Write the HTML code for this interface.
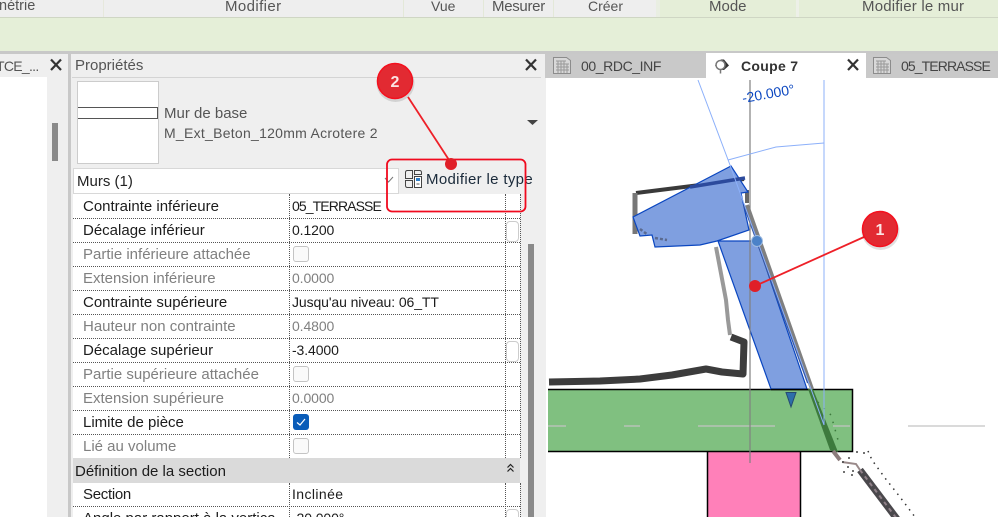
<!DOCTYPE html>
<html lang="fr"><head><meta charset="utf-8"><title>Propriétés</title>
<style>
html,body{margin:0;padding:0;background:#fff}
#p{position:relative;width:998px;height:517px;overflow:hidden;background:#efefef;font-family:"Liberation Sans",sans-serif;font-size:15px;color:#1c1c1c}
#p div{position:absolute}
.t{white-space:nowrap;line-height:18px;height:18px}
.v{font-size:14px;letter-spacing:-.1px}
.r{color:#555}
.g{color:#808080}
.hl{left:73px;width:447px;height:0;border-top:1px dotted #555}
.vl{width:0;border-left:1px dotted #555}
.cb{left:293px;width:14px;height:14px;border:1px solid #c4c4c4;border-radius:3px;background:#fafafa}
.sb{left:506px;width:11px;height:19px;border:1px solid #ccc;border-radius:4px;background:#fff}
</style></head><body>
<div id="p">
<!-- ribbon -->
<div style="left:0;top:0;width:660px;height:17px;background:#eeeeee"></div>
<div style="left:660px;top:0;width:338px;height:17px;background:#e5eed8"></div>
<div style="left:0;top:17px;width:998px;height:1px;background:#cfd6c4"></div>
<div style="left:0;top:18px;width:998px;height:33px;background:#e5efd8"></div>
<div style="left:0;top:51px;width:998px;height:3px;background:#c8c8c8"></div>
<div style="left:103px;top:0;width:1px;height:17px;background:#e6e8dc"></div>
<div style="left:403px;top:0;width:1px;height:17px;background:#e3e8d8"></div>
<div style="left:483px;top:0;width:1px;height:17px;background:#e3e8d8"></div>
<div style="left:553px;top:0;width:1px;height:17px;background:#e3e8d8"></div>
<div style="left:656px;top:0;width:4px;height:17px;background:#e9eee2"></div>
<div style="left:796px;top:0;width:3px;height:17px;background:#edf0e8"></div>
<div class="t r" style="left:-1px;top:-3px;font-size:14.500px">nétrie</div>
<div class="t r" style="left:225px;top:-2px;letter-spacing:.4px">Modifier</div>
<div class="t r" style="left:431px;top:-3px;font-size:14px">Vue</div>
<div class="t r" style="left:492px;top:-2px;letter-spacing:-.3px">Mesurer</div>
<div class="t r" style="left:588px;top:-3px;font-size:14px">Créer</div>
<div class="t r" style="left:709px;top:-2px">Mode</div>
<div class="t r" style="left:862px;top:-2px;letter-spacing:.2px">Modifier le mur</div>

<!-- left panel -->
<div style="left:0;top:77px;width:47px;height:440px;background:#fff"></div>
<div style="left:52px;top:123px;width:6px;height:38px;background:#8a8a8a"></div>
<div class="t r" style="left:-4px;top:57px;font-size:14px;letter-spacing:-.7px">TCE_...</div>
<svg style="position:absolute;left:49px;top:58px" width="14" height="14"><path d="M2 1.500L12 12M12 1.500L2 12" stroke="#333" stroke-width="2.200" fill="none"/></svg>
<div style="left:68px;top:54px;width:3px;height:463px;background:#c8c8c8"></div>

<!-- properties -->
<div class="t r" style="left:75px;top:57px">Propriétés</div>
<svg style="position:absolute;left:524px;top:58px" width="14" height="14"><path d="M2 1.500L12 12M12 1.500L2 12" stroke="#333" stroke-width="2.200" fill="none"/></svg>
<div style="left:72px;top:77px;width:469px;height:1px;background:#d4d4d4"></div>
<div style="left:77px;top:81px;width:80px;height:81px;background:#fff;border:1px solid #ccc"></div>
<div style="left:78px;top:107px;width:79px;height:10px;background:#fff;border:1px solid #555;border-left:0"></div>
<div class="t r" style="left:164px;top:105px">Mur de base</div>
<div class="t r" style="left:164px;top:124px;font-size:14px;letter-spacing:.27px">M_Ext_Beton_120mm Acrotere 2</div>
<svg style="position:absolute;left:527px;top:120px" width="12" height="6"><path d="M0 0H11L5.500 5Z" fill="#444"/></svg>
<div style="left:73px;top:168px;width:324px;height:24px;background:#fff;border:1px solid #d8d8d8"></div>
<div class="t" style="left:77px;top:173px;color:#222">Murs (1)</div>
<svg style="position:absolute;left:384px;top:176px" width="10" height="8"><path d="M1 2L4.500 6L9 1" stroke="#777" fill="none"/></svg>
<svg style="position:absolute;left:404px;top:169px" width="19" height="21" fill="none" stroke="#444" stroke-width="1"><path d="M1.500 3.500Q1.500 1.500 3.500 1.500H8.500V9.500H1.500ZM1.500 11.500H8.500V18.500H3.500Q1.500 18.500 1.500 16.500ZM10.500 1.500H15.500Q17.500 1.500 17.500 3.500V5.500H10.500Z"/><rect x="10.500" y="7.500" width="7" height="11" fill="#fff"/><rect x="12" y="9" width="4" height="3" fill="#2f7fc8" stroke="none"/><path d="M12.500 15L15.500 15" stroke="#555"/></svg>
<div class="t" style="left:426px;top:171px;color:#1a2a3a;letter-spacing:.33px">Modifier le type</div>

<!-- table -->
<div style="left:73px;top:194px;width:447px;height:323px;background:#fff"></div>
<div class="vl" style="left:289px;top:194px;height:264px"></div>
<div class="vl" style="left:505px;top:194px;height:264px"></div>
<div class="vl" style="left:520px;top:194px;height:264px"></div>
<div class="vl" style="left:289px;top:483px;height:34px"></div>
<div class="vl" style="left:505px;top:483px;height:34px"></div>
<div class="vl" style="left:520px;top:483px;height:34px"></div>
<div class="hl" style="top:218px"></div><div class="hl" style="top:242px"></div><div class="hl" style="top:266px"></div><div class="hl" style="top:290px"></div><div class="hl" style="top:314px"></div><div class="hl" style="top:338px"></div><div class="hl" style="top:362px"></div><div class="hl" style="top:386px"></div><div class="hl" style="top:410px"></div><div class="hl" style="top:434px"></div>
<div class="hl" style="top:506px"></div>
<div style="left:73px;top:458px;width:447px;height:25px;background:#dadada"></div>
<div style="left:528px;top:244px;width:6px;height:273px;background:#8a8a8a"></div>

<div class="t" style="left:83px;top:198px">Contrainte inférieure</div>
<div class="t v" style="left:292px;top:197px;letter-spacing:-.9px">05_TERRASSE</div>
<div class="t" style="left:83px;top:222px">Décalage inférieur</div>
<div class="t v" style="left:292px;top:221px">0.1200</div>
<div class="t g" style="left:83px;top:246px">Partie inférieure attachée</div>
<div class="t g" style="left:83px;top:270px">Extension inférieure</div>
<div class="t v g" style="left:292px;top:269px">0.0000</div>
<div class="t" style="left:83px;top:294px">Contrainte supérieure</div>
<div class="t v" style="left:292px;top:293px">Jusqu'au niveau: 06_TT</div>
<div class="t g" style="left:83px;top:318px">Hauteur non contrainte</div>
<div class="t v g" style="left:292px;top:317px">0.4800</div>
<div class="t" style="left:83px;top:342px">Décalage supérieur</div>
<div class="t v" style="left:292px;top:341px">-3.4000</div>
<div class="t g" style="left:83px;top:366px">Partie supérieure attachée</div>
<div class="t g" style="left:83px;top:390px">Extension supérieure</div>
<div class="t v g" style="left:292px;top:389px">0.0000</div>
<div class="t" style="left:83px;top:414px">Limite de pièce</div>
<div class="t g" style="left:83px;top:438px">Lié au volume</div>
<div class="t" style="left:75px;top:463px">Définition de la section</div>
<div class="t" style="left:83px;top:486px;letter-spacing:-.3px">Section</div>
<div class="t v" style="left:292px;top:485px;letter-spacing:.4px">Inclinée</div>
<div class="t" style="left:83px;top:510px">Angle par rapport à la vertica</div>
<div class="t v" style="left:292px;top:509px">-20.000°</div>

<div class="cb" style="top:246px"></div>
<div class="cb" style="top:366px"></div>
<div class="cb" style="top:438px"></div>
<div style="left:293px;top:414px;width:16px;height:16px;border-radius:3px;background:#0a5cb8"></div>
<svg style="position:absolute;left:293px;top:414px" width="16" height="16"><path d="M4 8.500L7 11L12 5" stroke="#fff" stroke-width="1.200" fill="none"/></svg>
<div class="sb" style="top:221px"></div>
<div class="sb" style="top:341px"></div>
<div class="sb" style="top:509px"></div>
<svg style="position:absolute;left:506px;top:463px" width="9" height="10"><path d="M1.500 4.500L4.500 1.500L7.500 4.500M1.500 8.500L4.500 5.500L7.500 8.500" stroke="#222" stroke-width="1.200" fill="none"/></svg>

<!-- tabs -->
<div style="left:545px;top:54px;width:453px;height:24px;background:#c9c9c9"></div>
<div style="left:706px;top:53px;width:160px;height:25px;background:#fff"></div>
<svg style="position:absolute;left:552px;top:55px" width="20" height="20" fill="#d8d8d8" stroke="#8c8c8c" stroke-width="1"><path d="M1.500 2.500H14.500L18.500 5.500V18.500H1.500Z"/><path d="M4 6H14M4 9H17M4 12H17M4 15H17M6 6V18M9 6V18M12 6V18M15 9V18" stroke="#999" fill="none"/></svg>
<div class="t" style="left:581px;top:57px;color:#444;font-size:14px;letter-spacing:-.4px">00_RDC_INF</div>
<svg style="position:absolute;left:712px;top:57px" width="19" height="18"><path d="M3 8.500L9 2.500H12L17 8.500L12 13H8Z" fill="#333"/><circle cx="8.500" cy="8" r="4.500" fill="#fff" stroke="#777" stroke-width="1.500"/><path d="M8.500 13V16.500" stroke="#777" stroke-width="1.500"/></svg>
<div class="t" style="left:741px;top:57px;font-weight:bold;color:#333;font-size:14px;letter-spacing:.3px">Coupe 7</div>
<svg style="position:absolute;left:846px;top:58px" width="14" height="14"><path d="M2 1.500L12 12M12 1.500L2 12" stroke="#333" stroke-width="2.200" fill="none"/></svg>
<svg style="position:absolute;left:872px;top:55px" width="20" height="20" fill="#d8d8d8" stroke="#8c8c8c" stroke-width="1"><path d="M1.500 2.500H14.500L18.500 5.500V18.500H1.500Z"/><path d="M4 6H14M4 9H17M4 12H17M4 15H17M6 6V18M9 6V18M12 6V18M15 9V18" stroke="#999" fill="none"/></svg>
<div class="t" style="left:901px;top:57px;color:#444;font-size:14px;letter-spacing:-.9px">05_TERRASSE</div>

<!-- canvas -->
<div style="left:546px;top:78px;width:452px;height:439px;background:#fff"></div>
<svg style="position:absolute;left:0;top:0" width="998" height="517" viewBox="0 0 998 517">
<rect x="707.500" y="451" width="93" height="70" fill="#ff80b9" stroke="#000" stroke-width="1.500"/>
<rect x="548" y="389.500" width="304.500" height="62" fill="#80c080"/>
<path d="M548 389.500H852.500V451.500H548" fill="none" stroke="#000" stroke-width="1.500"/>
<path d="M548 426H566M624 426H640M698 426H775M833 426H850M908 426H985" stroke="#c4c4c4" stroke-width="1.200"/>
<!-- scan lines -->
<path d="M549 382L575 381.500L600 381L640 379L672 375L706 369L722 372L743 374L744 342L731 337" fill="none" stroke="#3c3c3c" stroke-width="7" stroke-linejoin="round"/>
<path d="M730 335L728 320L726 300L716 247" fill="none" stroke="#999" stroke-width="4"/>
<path d="M636 193L700 185L744 179" fill="none" stroke="#3a3a3a" stroke-width="4"/>
<path d="M635 193L635 234" fill="none" stroke="#777" stroke-width="5"/>
<path d="M747 190L747 203" fill="none" stroke="#666" stroke-width="4"/>
<path d="M747 205L812 389" fill="none" stroke="#808080" stroke-width="4"/>
<!-- blue wall -->
<path d="M633 217L731 166L748 192L741 193L749 230L717 241L700 245L655 247L652 235L640 236Z" fill="#7f9fe0" stroke="#0a46c0" stroke-width="1.200"/>
<path d="M718 241H757L807 389H771Z" fill="#7f9fe0" stroke="#0a46c0" stroke-width="1.200"/>
<path d="M771 389.500H809" stroke="#000" stroke-width="1.500"/>
<path d="M690 187L745 178" stroke="#2c4a9c" stroke-width="3.500"/>
<path d="M744 205L808 383" stroke="#38579f" stroke-width="2"/>
<path d="M640 229L648 235M655 238L667 240" stroke="#5a6a90" stroke-width="2.500" stroke-dasharray="3 2"/>
<path d="M808 389L813 389L838 452L830 450Z" fill="#3d7a3d"/>
<path d="M833 451L840 460" stroke="#8c7c7c" stroke-width="4"/>
<path d="M842 462L856 464L860 470" stroke="#9a8a8a" stroke-width="2" fill="none"/>
<path d="M860 470L897 519" stroke="#4a484c" stroke-width="7"/>
<path d="M860 470L897 519" stroke="#8f8088" stroke-width="2" stroke-dasharray="4 4"/>
<path d="M868 451L872 460L885 478L900 497L915 517" fill="none" stroke="#333" stroke-width="1.500" stroke-dasharray="1.500 5"/>
<path d="M856 452h2M863 453h2M848 458h2M842 462h2M843 472h2M852 471h2M847 467h2M851 475h2" stroke="#444" stroke-width="1.500"/>
<path d="M813 395L820 405L831 415L838 440" fill="none" stroke="#3d7a3d" stroke-width="1.500" stroke-dasharray="1.500 7"/>
<!-- guides -->
<path d="M750 80V463" stroke="#808080" stroke-width="1.200"/>
<path d="M824 80V425" stroke="#8cb0fa" stroke-width="1"/>
<path d="M698 80L730 165L824 425" fill="none" stroke="#8cb0fa" stroke-width="1"/>
<path d="M728 160L776 147L824 143" fill="none" stroke="#8cb0fa" stroke-width="1"/>
<circle cx="757" cy="241" r="5.500" fill="#4b82c8" stroke="#a0bce0"/>
<path d="M786 392.500H796L791 407Z" fill="#2d6eaa" stroke="#264a70"/>
<text x="743" y="103" transform="rotate(-10 743 103)" font-family="Liberation Sans, sans-serif" font-size="14" fill="#0a46c0">-20.000°</text>
<!-- annotations -->
<g fill="none" stroke="#ee2028">
<rect x="387" y="159.500" width="138.500" height="52" rx="5" stroke="#f00a1e" stroke-width="1.800"/>
<path d="M408 97L451 163" stroke-width="1.800"/>
<path d="M864 237L755 286" stroke-width="1.800"/>
</g>
<circle cx="451" cy="164" r="6" fill="#e01f28"/>
<circle cx="755" cy="286" r="6" fill="#e01f28"/>
<circle cx="395.500" cy="83" r="19" fill="#000" opacity=".12"/>
<circle cx="880.500" cy="231" r="19" fill="#000" opacity=".12"/>
<circle cx="395" cy="81" r="17.500" fill="#e22a32" stroke="#f5101e" stroke-width="1.500"/>
<circle cx="880" cy="229" r="17.500" fill="#e22a32" stroke="#f5101e" stroke-width="1.500"/>
<text x="395" y="87" text-anchor="middle" font-family="Liberation Sans, sans-serif" font-size="16" font-weight="bold" fill="#fbe4e4">2</text>
<text x="880" y="235" text-anchor="middle" font-family="Liberation Sans, sans-serif" font-size="16" font-weight="bold" fill="#fbe4e4">1</text>
</svg>
</div>
</body></html>
